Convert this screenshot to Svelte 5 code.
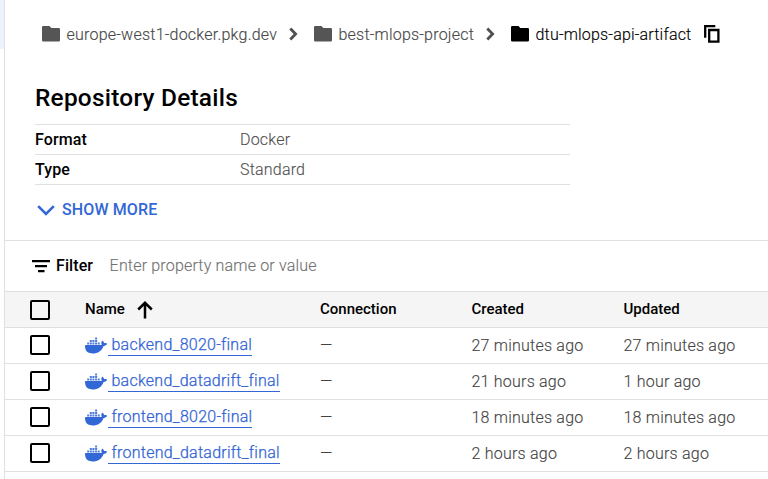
<script>
  const crumbs = [
    { label: 'europe-west1-docker.pkg.dev', cls: 'c1' },
    { label: 'best-mlops-project', cls: 'c2' },
    { label: 'dtu-mlops-api-artifact', cls: 'c3' }
  ];
  const details = [
    ['Format', 'Docker'],
    ['Type', 'Standard']
  ];
  const rows = [
    { name: 'backend_8020-final', created: '27 minutes ago', updated: '27 minutes ago' },
    { name: 'backend_datadrift_final', created: '21 hours ago', updated: '1 hour ago' },
    { name: 'frontend_8020-final', created: '18 minutes ago', updated: '18 minutes ago' },
    { name: 'frontend_datadrift_final', created: '2 hours ago', updated: '2 hours ago' }
  ];
  const containers = [
    [11, 3.4], [5.3, 6.1], [8.1, 6.1], [11, 6.1],
    [2.4, 8.8], [5.3, 8.8], [8.1, 8.8], [11, 8.8], [13.9, 8.8]
  ];
</script>

<div class="page">
  <aside><div class="selected"></div></aside>
  <main>
    <nav>
      {#each crumbs as c, i}
        <div class="crumb {c.cls}">
          <svg class="folder" width="18" height="16" viewBox="0 0 18 16"><path fill="currentColor" d="M1.2 0H7.5L9.3 2H16.8Q18 2 18 3.2V14.2Q18 15.4 16.8 15.4H1.2Q0 15.4 0 14.2V1.2Q0 0 1.2 0Z" /></svg>
          <span>{c.label}</span>
          {#if i < 2}
            <svg class="chev" width="9" height="14" viewBox="0 0 9 14"><path fill="none" stroke="#505050" stroke-width="2.8" d="M1.3 1.5L6.6 7L1.3 12.5" /></svg>
          {:else}
            <svg class="copy" width="16" height="18" viewBox="0 0 16 18"><path fill="none" stroke="#000" stroke-width="2.3" d="M1.2 12.7V1.2H11.3M5.2 5H14.4V16.7H5.2Z" /></svg>
          {/if}
        </div>
      {/each}
    </nav>

    <section class="details">
      <h1>Repository Details</h1>
      <dl>
        {#each details as [k, v]}
          <div><dt>{k}</dt><dd>{v}</dd></div>
        {/each}
      </dl>
      <button class="more">
        <svg width="18" height="11" viewBox="0 0 18 11"><path fill="none" stroke="#3367d6" stroke-width="2.6" d="M1.2 1.2L9 9L16.8 1.2" /></svg>
        <span>SHOW MORE</span>
      </button>
    </section>

    <div class="filter">
      <svg width="18" height="13" viewBox="0 0 18 13"><path d="M0 0H18V2.3H0ZM3 5H15V7.3H3ZM6 10H12.5V12.3H6Z" /></svg>
      <b>Filter</b>
      <span>Enter property name or value</span>
    </div>

    <div class="row head">
      <i class="box"></i>
      <div class="name">
        <span>Name</span>
        <svg width="16" height="18" viewBox="0 0 16 18"><path fill="none" stroke="#000" stroke-width="2.5" d="M8 17.5V2M1.2 8.5L8 1.8L14.8 8.5" /></svg>
      </div>
      <div class="conn">Connection</div>
      <div class="created">Created</div>
      <div class="updated">Updated</div>
    </div>
    {#each rows as r}
      <div class="row">
        <i class="box"></i>
        <div class="name">
          <svg class="whale" width="22" height="17" viewBox="0 3 24 18" fill="#3367d6">
            {#each containers as [x, y]}<rect {x} {y} width="2.2" height="2.1" rx=".2" opacity=".85" />{/each}
            <path d="M23.763 9.89c-.065-.051-.672-.51-1.954-.51-.338.001-.676.03-1.01.087-.248-1.7-1.653-2.53-1.716-2.566l-.344-.199-.226.327c-.284.438-.49.922-.612 1.43-.23.97-.09 1.882.403 2.661-.595.332-1.55.413-1.744.42H.751a.751.751 0 00-.75.748 11.376 11.376 0 00.692 4.062c.545 1.428 1.355 2.48 2.41 3.124 1.18.723 3.1 1.137 5.275 1.137.983.003 1.963-.086 2.93-.266a12.248 12.248 0 003.823-1.389c.98-.567 1.86-1.288 2.61-2.136 1.252-1.418 1.998-2.997 2.553-4.4h.221c1.372 0 2.215-.549 2.68-1.009.309-.293.55-.65.707-1.046z" />
          </svg>
          <span class="link">{r.name}</span>
        </div>
        <div class="conn">—</div>
        <div class="created">{r.created}</div>
        <div class="updated">{r.updated}</div>
      </div>
    {/each}
  </main>
</div>

<style>
  .page { display: flex; width: 768px; height: 479px; overflow: hidden; background: #fff; font: 300 16px/20px Roboto, sans-serif; color: #424242; white-space: nowrap; }
  .page * { box-sizing: border-box; }
  svg { display: block; flex: none; }
  aside { width: 4px; flex: none; }
  .selected { height: 49px; background: #edf3fe; }
  main { flex: 1; border-left: 1px solid #e0e0e0; min-width: 0; }
  nav { display: flex; height: 69px; padding: 24px 0 0 37px; }
  .crumb { display: flex; align-items: center; height: 20px; color: #555; }
  .crumb span { position: relative; top: 1px; left: -0.5px; -webkit-text-stroke: .15px currentColor; }
  .folder { margin-right: 7px; }
  .c1 { width: 272px; letter-spacing: .23px; }
  .c2 { width: 197px; letter-spacing: .21px; }
  .c3 { color: #000; letter-spacing: .19px; }
  .c1 span { width: 222px; color: #484848; }
  .c2 span { width: 147px; color: #484848; }
  .c3 span { width: 168px; }
  .details { height: 172px; padding: 14px 30px 0; border-bottom: 1px solid #e0e0e0; }
  h1 { margin: 0; font-weight: 500; font-size: 24.4px; line-height: 29px; color: #000; letter-spacing: .25px; }
  dl { margin: 12px 0 0; width: 535px; border-top: 1px solid #e0e0e0; }
  dl div { display: flex; height: 30px; border-bottom: 1px solid #e0e0e0; line-height: 29px; }
  dt { width: 205px; color: #000; font-weight: 500; letter-spacing: .12px; }
  dd { margin: 0; color: #505050; letter-spacing: .2px; -webkit-text-stroke: .12px currentColor; }
  .more { display: flex; align-items: center; margin: 15px 0 0 2px; padding: 0; border: 0; background: none; font: 500 16px/20px Roboto, sans-serif; color: #3367d6; letter-spacing: .12px; }
  .more svg { margin-right: 7px; }
  .filter { display: flex; align-items: center; height: 50px; padding-left: 27px; color: #707070; letter-spacing: .18px; }
  .filter svg { margin-right: 6px; }
  .filter span { -webkit-text-stroke: .12px currentColor; }
  .filter b { width: 53.6px; font-weight: 500; color: #000; letter-spacing: .1px; }
  .row { display: flex; align-items: center; height: 36px; border-bottom: 1px solid #e0e0e0; letter-spacing: .22px; }
  .row:not(.head) .created, .row:not(.head) .updated { -webkit-text-stroke: .12px currentColor; }
  .head { height: 37px; border-top: 1px solid #e0e0e0; background: #f5f5f5; color: #000; font-weight: 500; font-size: 15px; line-height: 18px; letter-spacing: 0; }
  .head > div:not(.name), .head span { padding-bottom: 2px; }
  .box { width: 20px; height: 20px; margin: 0 35px 0 25px; border: 2px solid #000; border-radius: 2px; flex: none; }
  .row:not(.head) .box { margin-bottom: 1px; }
  .name { display: flex; align-items: center; width: 235px; flex: none; }
  .head .name svg { margin-left: 12px; }
  .whale { margin-right: 1px; }
  .link { padding: 0 0 0 3.5px; height: 21px; border-bottom: 1px solid #3367d6; color: #3163d4; letter-spacing: .24px; -webkit-text-stroke: .25px currentColor; }
  .conn { width: 151.5px; flex: none; }
  .created { width: 152px; flex: none; }
</style>
